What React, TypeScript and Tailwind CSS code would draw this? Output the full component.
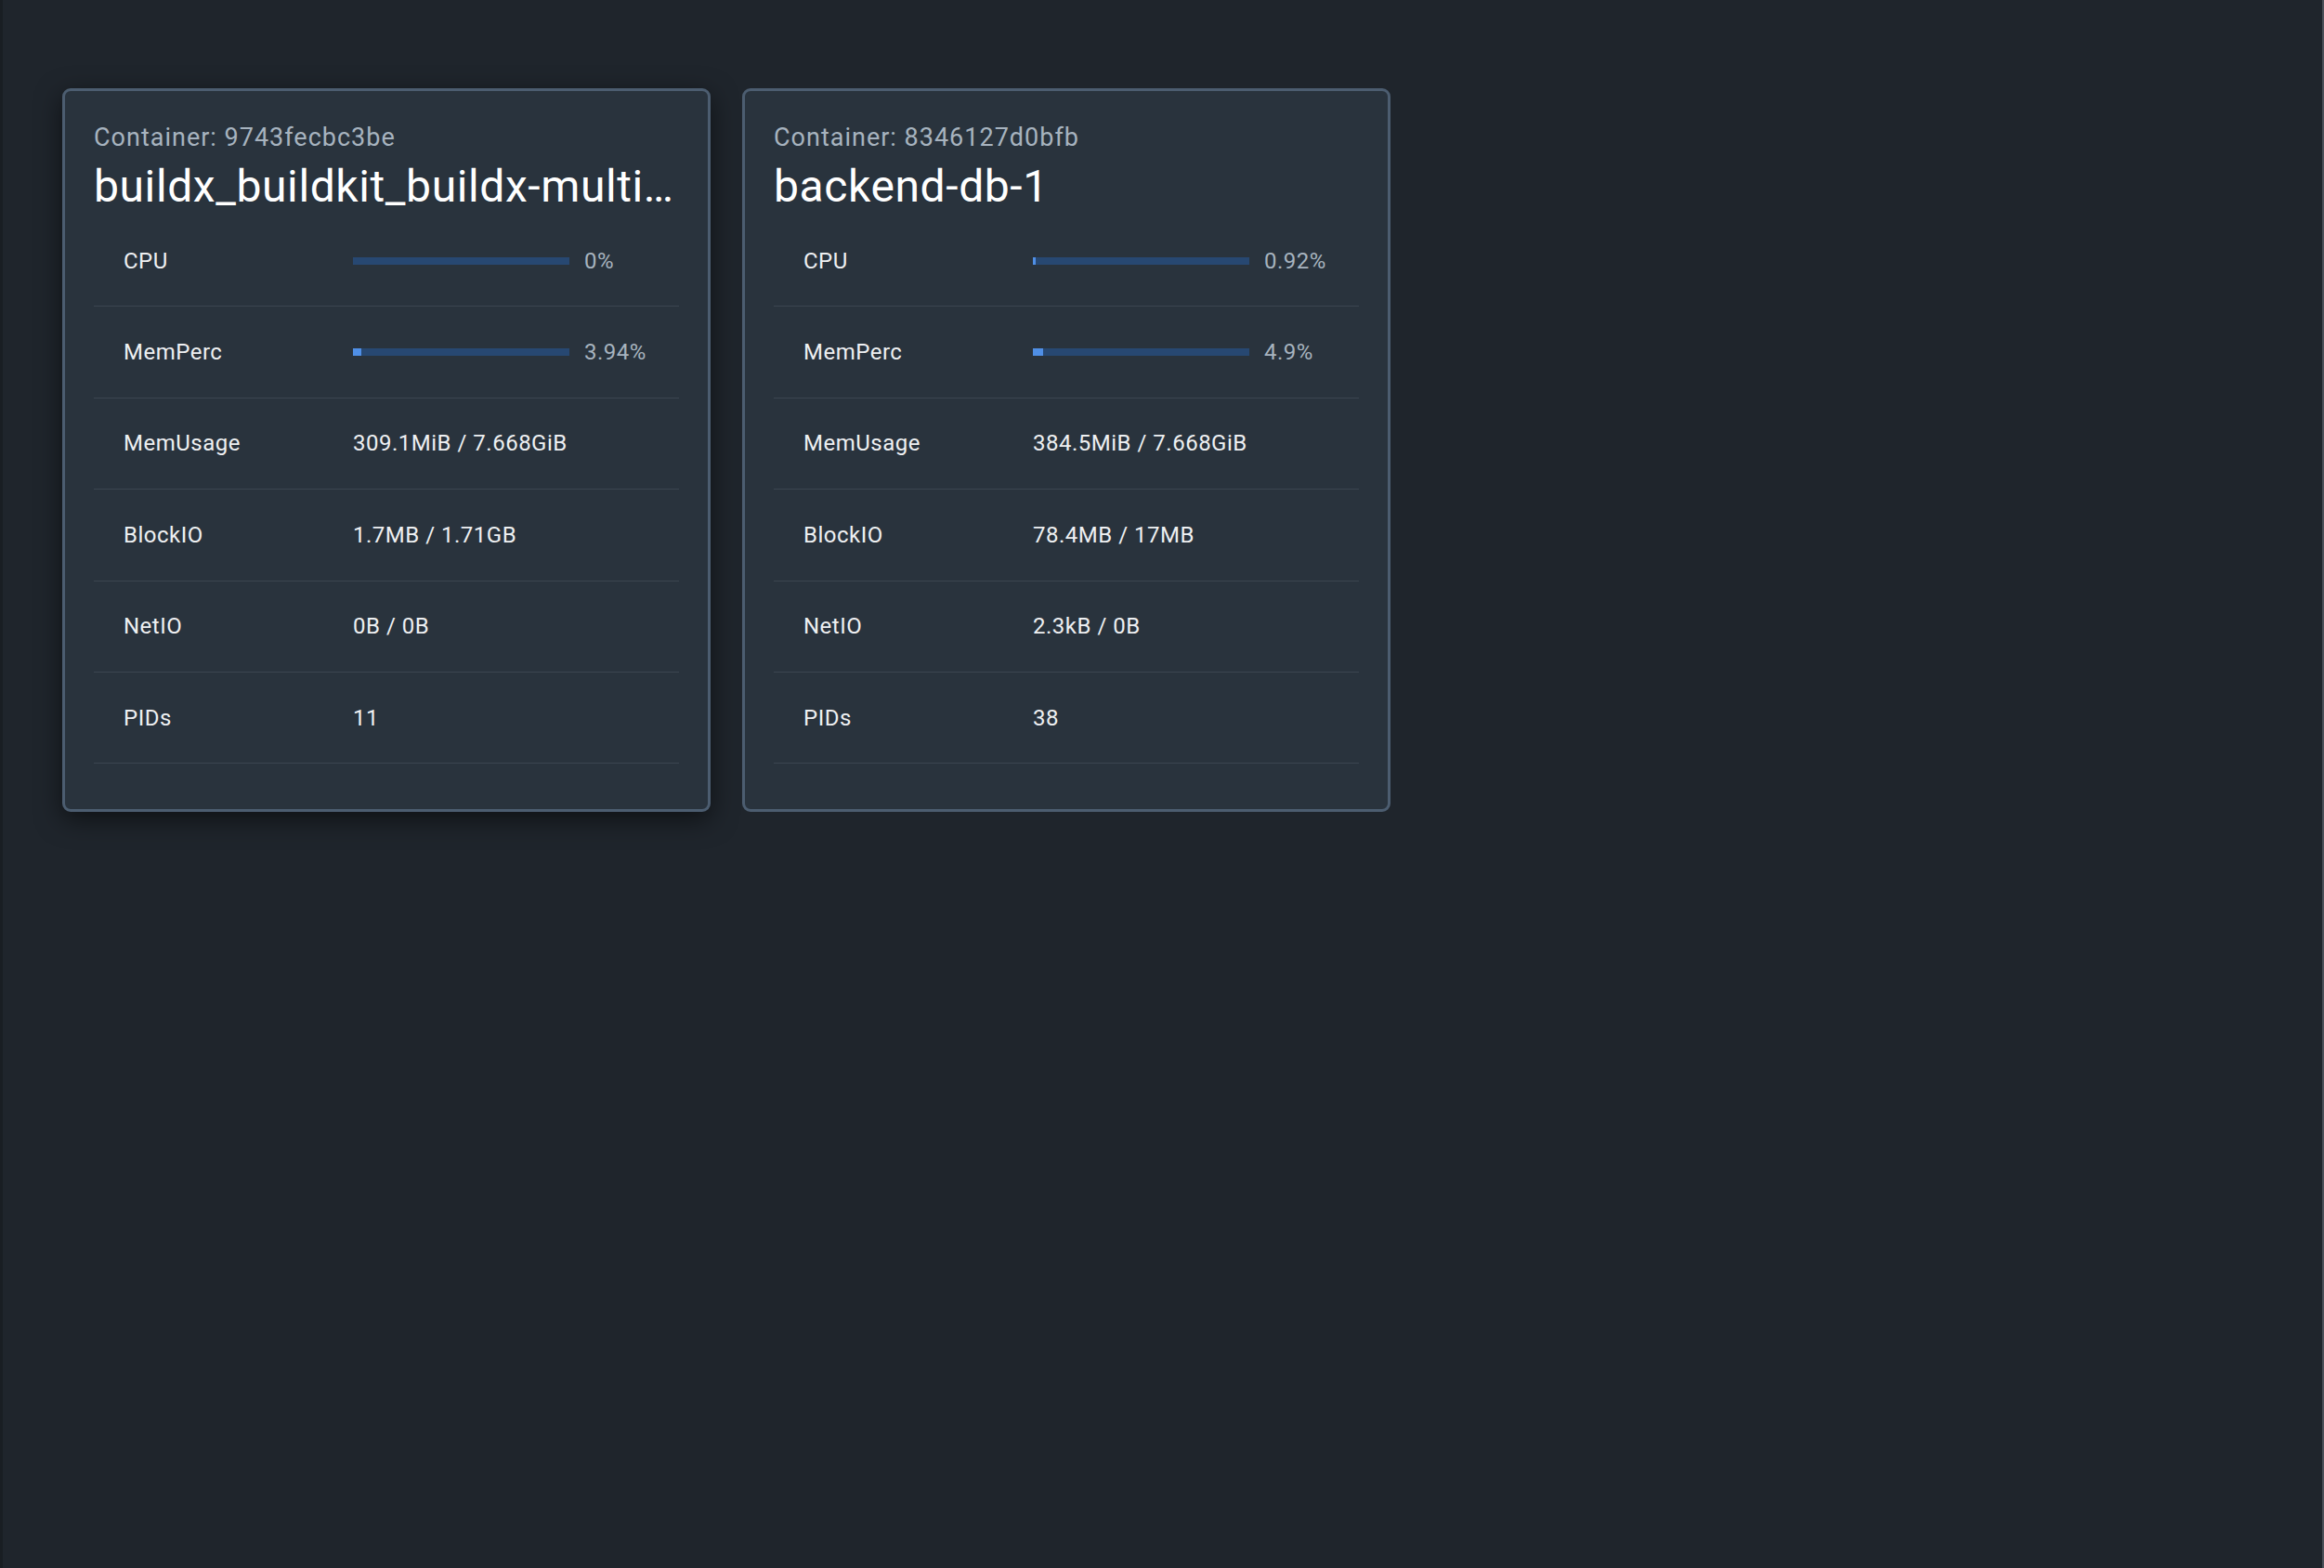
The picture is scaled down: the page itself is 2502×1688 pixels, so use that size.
import React from "react";

type Row = { label: string; value: string; pct?: number };

type Card = { id: string; name: string; rows: Row[]; hovered?: boolean };

const cards: Card[] = [
  {
    id: "9743fecbc3be",
    name: "buildx_buildkit_buildx-multi-platform0",
    hovered: true,
    rows: [
      { label: "CPU", value: "0%", pct: 0 },
      { label: "MemPerc", value: "3.94%", pct: 3.94 },
      { label: "MemUsage", value: "309.1MiB / 7.668GiB" },
      { label: "BlockIO", value: "1.7MB / 1.71GB" },
      { label: "NetIO", value: "0B / 0B" },
      { label: "PIDs", value: "11" },
    ],
  },
  {
    id: "8346127d0bfb",
    name: "backend-db-1",
    rows: [
      { label: "CPU", value: "0.92%", pct: 0.92 },
      { label: "MemPerc", value: "4.9%", pct: 4.9 },
      { label: "MemUsage", value: "384.5MiB / 7.668GiB" },
      { label: "BlockIO", value: "78.4MB / 17MB" },
      { label: "NetIO", value: "2.3kB / 0B" },
      { label: "PIDs", value: "38" },
    ],
  },
];

function StatCard({ card }: { card: Card }) {
  return (
    <div
      className={
        "w-[698px] rounded-[9px] border-[3px] border-[#4c5d70] bg-[#29333d] px-[31px] pt-[31px] pb-[49px] " +
        (card.hovered ? "shadow-[0_8px_28px_rgba(0,0,0,0.55)]" : "")
      }
    >
      <div className="text-[27px] leading-[39px] tracking-[1px] text-[#a7b3bf]">
        Container: {card.id}
      </div>
      <div className="mt-[5px] truncate text-[48px] leading-[56px] tracking-[0.6px] text-white">
        {card.name}
      </div>
      <div className="mt-[3px] flex flex-col">
        {card.rows.map((r) => (
          <div
            key={r.label}
            className="flex h-[98.4px] items-center border-b border-[#3b4550] text-[24px] tracking-[0.5px]"
          >
            <div className="w-[279px] shrink-0 pl-[32px] text-[#eef0f2]">{r.label}</div>
            {r.pct !== undefined ? (
              <div className="flex items-center">
                <div className="relative h-[8px] w-[233px] bg-[#274872]">
                  <div
                    className="absolute left-0 top-0 h-full bg-[#4f8fe6]"
                    style={{ width: `${r.pct}%`, minWidth: r.pct > 0 ? 3 : 0 }}
                  />
                </div>
                <div className="ml-[16px] text-[#a7b3bf]">{r.value}</div>
              </div>
            ) : (
              <div className="text-[#eef0f2]">{r.value}</div>
            )}
          </div>
        ))}
      </div>
    </div>
  );
}

export default function App() {
  return (
    <div
      className="min-h-[1688px] w-full border-l-[3px] border-r-[2px] border-l-[#191e23] border-r-[#4a5058] bg-[#1f252c]"
      style={{ fontFamily: "Roboto, 'Noto Sans', sans-serif" }}
    >
      <div className="flex items-start gap-[34px] pl-[64px] pt-[95px]">
        {cards.map((c) => (
          <StatCard key={c.id} card={c} />
        ))}
      </div>
    </div>
  );
}
